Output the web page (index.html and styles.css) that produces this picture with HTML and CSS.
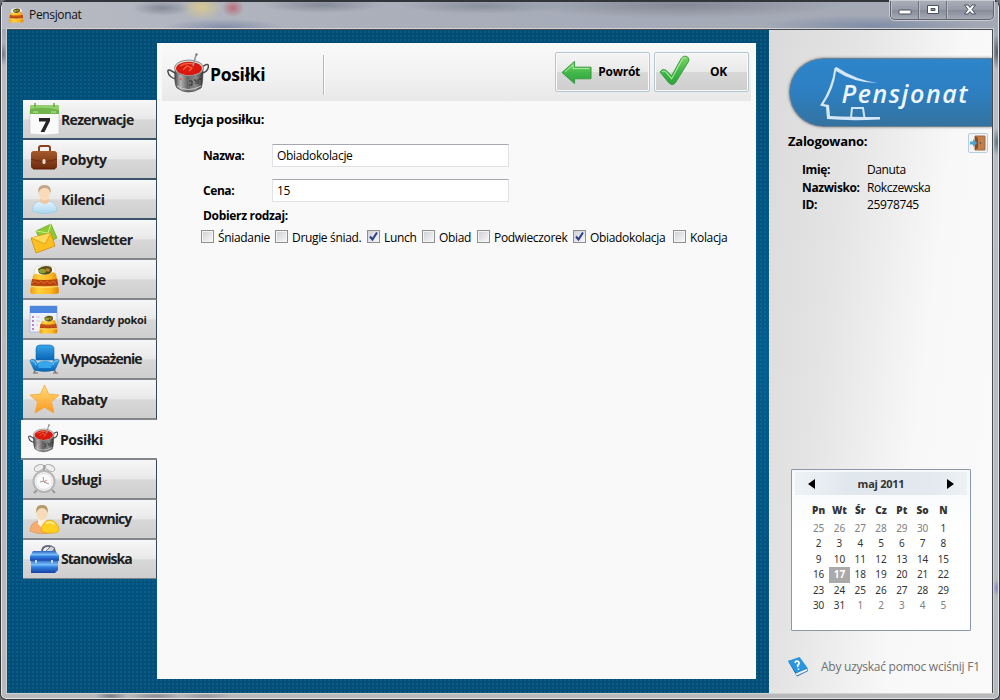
FILE: index.html
```html
<!DOCTYPE html>
<html lang="pl">
<head>
<meta charset="utf-8">
<title>Pensjonat</title>
<link rel="stylesheet" href="styles.css">
</head>
<body>
<svg class="defs" width="0" height="0">
  <defs>
    <linearGradient id="green" x2="0" y2="1"><stop stop-color="#7fd65e"/><stop offset=".5" stop-color="#43b84a"/><stop offset="1" stop-color="#2aa43a"/></linearGradient>
    <linearGradient id="steel"><stop stop-color="#444"/><stop offset=".2" stop-color="#b5b5b5"/><stop offset=".45" stop-color="#666"/><stop offset=".75" stop-color="#8a8a8a"/><stop offset="1" stop-color="#333"/></linearGradient>
    <linearGradient id="blue" x2="0" y2="1"><stop stop-color="#38a5ea"/><stop offset="1" stop-color="#0864b4"/></linearGradient>
    <linearGradient id="gold" x2="0" y2="1"><stop stop-color="#ffe07a"/><stop offset="1" stop-color="#fb9620"/></linearGradient>
    <linearGradient id="brown" x2="0" y2="1"><stop stop-color="#a55a2c"/><stop offset="1" stop-color="#6c2a0c"/></linearGradient>
    <linearGradient id="shirt" x2="0" y2="1"><stop stop-color="#e6f4fc"/><stop offset="1" stop-color="#a9d6f0"/></linearGradient>
    <linearGradient id="box" x2="0" y2="1"><stop stop-color="#2763c8"/><stop offset=".35" stop-color="#79bdf8"/><stop offset=".55" stop-color="#2f7fe0"/><stop offset="1" stop-color="#1a3fa5"/></linearGradient>
    <linearGradient id="quilt"><stop stop-color="#f09c10"/><stop offset=".3" stop-color="#ffd03c"/><stop offset=".7" stop-color="#fdb823"/><stop offset="1" stop-color="#dc8408"/></linearGradient>
  </defs>
  <symbol id="bed" viewBox="0 0 32 32">
    <path d="M6 12 7 5Q8 3 12 3Q18 1 23 3Q27 3 27 6L28 13Z" fill="#f8f7f0" stroke="#d8d2c4" stroke-width=".6"/>
    <path d="M5 13Q6 10 10 11Q18 14 25 9Q28 10 28.500 13L31 28Q31 31 28 31H5Q2 31 2 28Z" fill="url(#quilt)"/>
    <path d="M4 16Q16 18 29.300 16L30.200 22.500Q16 24 2.800 22.500Z" fill="#b8430f"/>
    <path d="M4 20l3-2 3 2.500 3-2.500 3 2.500 3-2.500 3 2.500 3-2.500 3 2.500" stroke="#dd7422" fill="none"/>
    <path d="M2.700 23.500Q16 25 30.300 23.500" fill="none" stroke="#ffe07a" stroke-width="1.200"/>
    <path d="M10 6Q16 1 23 4Q26 8 21 11Q15 13 11 10Z" fill="#55501b"/><ellipse cx="14.500" cy="8" rx="3.500" ry="2.300" fill="#8da12e"/><path d="M18 5l4 1-1 3-3-1z" fill="#c77c2c"/>
  </symbol>
  <symbol id="pot" viewBox="0 0 42 42">
    <path d="M9 21Q0 14 1 19Q2 25 10 26M34 15Q41 9 41.500 13Q41 19 35 20" fill="none" stroke="#4a4a4a" stroke-width="1.500"/>
    <path d="M8 17Q7 31 10 35Q21 43 34 35Q36 31 36 15Z" fill="url(#steel)" stroke="#444" stroke-width=".7"/>
    <path d="M10 33Q21 40 34 33" fill="none" stroke="#ccc" stroke-width="1"/>
    <ellipse cx="22" cy="15" rx="14.500" ry="8" fill="#d5d5d5" stroke="#777" stroke-width=".8"/>
    <ellipse cx="22" cy="15.500" rx="13" ry="6.800" fill="#d9190d"/>
    <path d="M13 13Q19 9 27 11M16 17l4-4 5 2-3 3" stroke="#f5673f" stroke-width="1.300" fill="none"/>
    <path d="M26 13 29 2" stroke="#999" stroke-width="1.600"/><circle cx="29.500" cy="1.500" r="1.200" fill="#777"/>
    <path d="M22 28h3v4h-3m5-5h2v4m2-5v5m1-5h3" stroke="#292929" stroke-width=".9" fill="none"/>
    <circle cx="13.500" cy="26" r="1.200" fill="#d66"/>
  </symbol>
  <symbol id="cal" viewBox="0 0 32 32">
    <path d="M2 8H31V31Q16 33 2 31Z" fill="#fafafa" stroke="#c5c5c5" stroke-width=".7"/>
    <path d="M2 4Q2 2 4 2H29Q31 2 31 4V11H2Z" fill="#6fb54b"/><path d="M2 6Q16 3 31 7V4Q31 2 29 2H4Q2 2 2 4Z" fill="#94d06d"/>
    <path d="M7 0v4M26 0v4" stroke="#6aa34d" stroke-width="1.500"/><path d="M5 9h5m13 0h5" stroke="#c5e7ae"/>
    <path d="M11 15H22V18L16.500 29H12.500L18 18.500H11Z" fill="#252525"/>
  </symbol>
  <symbol id="case" viewBox="0 0 32 32">
    <path d="M11 8V5Q11 3 13 3H20Q22 3 22 5V8" fill="none" stroke="#88411d" stroke-width="2"/>
    <rect x="3" y="8" width="26" height="18" rx="3" fill="url(#brown)"/><path d="M3 16Q16 21 29 16" fill="none" stroke="#6f2c10"/>
    <rect x="14.500" y="16" width="3" height="5" rx="1.500" fill="#e9dccf"/><path d="M5 26h22" stroke="#5d2109"/>
  </symbol>
  <symbol id="person" viewBox="0 0 32 32">
    <path d="M4 28Q4 20 12 18Q17 21 21 18Q29 20 29 28Q17 33 4 28Z" fill="url(#shirt)" stroke="#9ec8df" stroke-width=".7"/>
    <path d="M12 16h9v3q-4 4-9 0z" fill="#efc79e"/><ellipse cx="16.500" cy="10" rx="5.800" ry="7.500" fill="#f8dcb9"/>
    <path d="M10.500 10Q9 2 16.500 2Q24 2 22.500 10Q21 5 17 5Q12 5 10.500 10Z" fill="#c2a688"/>
  </symbol>
  <symbol id="mail" viewBox="0 0 32 32">
    <path d="M8 8 23 1 29 15 14 22Z" fill="#8cc936" stroke="#67a320" stroke-width=".7"/><path d="M8 8 20 10 23 1" fill="none" stroke="#d2ef87"/>
    <path d="M3 15 23 10 27 23 8 30Z" fill="#fbbf22" stroke="#d98b0b" stroke-width=".8"/><path d="M3 15 17 21 23 10" fill="#ffd95b" stroke="#d7940f" stroke-width=".8"/>
  </symbol>
  <symbol id="standards" viewBox="0 0 32 32">
    <rect x="2" y="3" width="27" height="26" fill="#eef2fb" stroke="#9aafe0" stroke-width=".7"/><path d="M2 3H29V10H2Z" fill="#4b86dc"/>
    <path d="M4 14h2m-2 4h2m-2 4h2m-2 4h2" stroke="#b55aaa" stroke-width="1.500"/><path d="M8 14h4m-4 4h4m-4 4h2" stroke="#ccc"/>
    <use href="#bed" x="9" y="11" width="22" height="20"/>
  </symbol>
  <symbol id="chair" viewBox="0 0 32 32">
    <path d="M6 29 10 25H23L28 29M5 30h5m15 0h5" stroke="#666" stroke-width="1.200" fill="none"/>
    <path d="M8 17V6Q8 2 12 2H21Q26 2 26 6V17Z" fill="url(#blue)" stroke="#0d68b0" stroke-width=".6"/>
    <path d="M2 18Q3 15 7 17L11 23H23L26 17Q31 15 31 18L27 27Q17 30 6 27Z" fill="url(#blue)" stroke="#0d68b0" stroke-width=".6"/>
    <path d="M9 20Q17 15 25 20L23 25H11Z" fill="#38a5ea"/>
    <path d="M3 18q4-1 5 4m22-4q-4-1-5 4" fill="none" stroke="#87d5ff"/>
  </symbol>
  <symbol id="star" viewBox="0 0 32 32"><path d="M16.500 2 20.500 11 31 12 23.500 19 26 30 16.500 24.500 7 30 9.500 19 2 12 12.500 11Z" fill="url(#gold)" stroke="#f5a73d" stroke-width=".8" stroke-linejoin="round"/></symbol>
  <symbol id="clock" viewBox="0 0 32 32">
    <path d="M9 27 6 30M24 27 27 30M16 2v6" stroke="#999" stroke-width="2"/>
    <ellipse cx="11" cy="5" rx="5" ry="3" fill="#eee" stroke="#aaa" transform="rotate(-25 11 5)"/><ellipse cx="22" cy="5" rx="5" ry="3" fill="#eee" stroke="#aaa" transform="rotate(25 22 5)"/>
    <circle cx="16" cy="18.500" r="10.500" fill="#f5f5f5" stroke="#b5b5b5" stroke-width="2"/><circle cx="16" cy="18.500" r="8" fill="#fafafa" stroke="#e2e2e2"/>
    <path d="M15 14l1 5 5 2M12 19l4-1" stroke="#999" fill="none"/><path d="M16 19l3-2" stroke="#d88"/>
  </symbol>
  <symbol id="worker" viewBox="0 0 32 32">
    <path d="M2 28Q2 20 10 18H18Q24 20 25 29Q13 33 2 28Z" fill="#f7ad70" stroke="#dc8a4b" stroke-width=".6"/>
    <path d="M10 16h8l-1 6-3 3-4-4z" fill="#fff0df"/><ellipse cx="14" cy="10" rx="5.500" ry="7.500" fill="#f8dcb9"/>
    <path d="M8.500 10Q7 2 14 2Q21 2 19.500 10Q18 5 14 5Q10 5 8.500 10Z" fill="#b49a6a"/>
    <path d="M13 28Q14 18 22 17Q29 18 31 26L30 29Q21 32 13 28Z" fill="#ffcf22" stroke="#dda300" stroke-width=".7"/><path d="M18 20q5-2 8 1" fill="none" stroke="#fff0a0" stroke-width="1.500"/>
  </symbol>
  <symbol id="toolbox" viewBox="0 0 32 32">
    <path d="M14 9Q14 3 20 3Q26 3 27 9" fill="none" stroke="#667" stroke-width="2"/><path d="M18 8l5-5 4 2-4 5z" fill="#ccd5dd" stroke="#556" stroke-width=".8"/>
    <path d="M2 13 5 8H27L31 12V18H2Z" fill="url(#box)"/><path d="M3 17H30V27L27 30H3Z" fill="url(#box)"/><path d="M2 17.500H31" stroke="#2758b4"/>
    <path d="M7 17v3h2v-3m14 0v3h2v-3" fill="#b7dcff"/>
  </symbol>
</svg>

<div class="window">
  <header class="titlebar">
    <svg class="app-icon"><use href="#bed"/></svg>
    <span class="app-name">Pensjonat</span>
    <div class="controls">
      <span class="ctl"><svg width="14" height="12"><rect x="1" y="6" width="12" height="4" rx=".5" fill="#fff" stroke="#4b505c"/></svg></span>
      <span class="ctl"><svg width="14" height="12"><path d="M1.500 1.500h11v8h-11zM5 4.500v2h4v-2z" fill="#fff" fill-rule="evenodd" stroke="#4b505c"/></svg></span>
      <span class="ctl close"><svg width="14" height="12"><path d="M1.500 1h3.500l2 2.500L9 1h3.500L9 5.500l3.500 4.500H9L7 7.500 5 10H1.500L5 5.500z" fill="#fff" stroke="#4b505c"/></svg></span>
    </div>
  </header>
  <div class="content">
    <nav class="tabs">
      <a class="tab"><svg><use href="#cal"/></svg><span class="snug">Rezerwacje</span></a>
      <a class="tab"><svg><use href="#case"/></svg><span>Pobyty</span></a>
      <a class="tab"><svg><use href="#person"/></svg><span>Kilenci</span></a>
      <a class="tab"><svg><use href="#mail"/></svg><span class="snug">Newsletter</span></a>
      <a class="tab"><svg><use href="#bed"/></svg><span>Pokoje</span></a>
      <a class="tab"><svg><use href="#standards"/></svg><span class="small">Standardy pokoi</span></a>
      <a class="tab"><svg><use href="#chair"/></svg><span class="tight">Wyposażenie</span></a>
      <a class="tab"><svg><use href="#star"/></svg><span>Rabaty</span></a>
      <a class="tab active"><svg><use href="#pot"/></svg><span>Posiłki</span></a>
      <a class="tab"><svg><use href="#clock"/></svg><span>Usługi</span></a>
      <a class="tab"><svg><use href="#worker"/></svg><span class="tight">Pracownicy</span></a>
      <a class="tab"><svg><use href="#toolbox"/></svg><span class="tight">Stanowiska</span></a>
    </nav>
    <main class="panel">
      <div class="toolbar">
        <svg class="pot"><use href="#pot"/></svg>
        <h1>Posiłki</h1>
        <span class="divider"></span>
        <button class="btn"><svg viewBox="0 0 32 32"><path d="M1 16.500 14 5V11H31V23H14V28Z" fill="url(#green)" stroke="#3a9a45"/><path d="M4 16 12.500 8.500V12.500H29.500" fill="none" stroke="#a9eda0"/></svg><span>Powrót</span></button>
        <button class="btn ok"><svg viewBox="0 0 32 32"><path d="M1 17Q3 13 7 15L13 21 23 3Q26-1 30 2Q32 4 30 7L17 28Q14 32 10 28Z" fill="url(#green)" stroke="#3a9a45"/><path d="M3 17q2-2 4 0l6 7L24 4q2-3 4-1" fill="none" stroke="#a4e898" stroke-width="1.200"/></svg><span>OK</span></button>
      </div>
      <form class="form">
        <h2>Edycja posiłku:</h2>
        <div class="field"><label>Nazwa:</label><div class="input">Obiadokolacje</div></div>
        <div class="field"><label>Cena:</label><div class="input">15</div></div>
        <div class="group">Dobierz rodzaj:</div>
        <div class="checks">
          <label class="check c1"><i></i>Śniadanie</label>
          <label class="check c2"><i></i>Drugie śniad.</label>
          <label class="check c3"><i class="on"><svg viewBox="0 0 11 11"><path d="M2 5.500 4.500 8.500 9 1.500" /></svg></i>Lunch</label>
          <label class="check c4"><i></i>Obiad</label>
          <label class="check c5"><i></i>Podwieczorek</label>
          <label class="check c6"><i class="on"><svg viewBox="0 0 11 11"><path d="M2 5.500 4.500 8.500 9 1.500" /></svg></i>Obiadokolacja</label>
          <label class="check c7"><i></i>Kolacja</label>
        </div>
      </form>
    </main>
    <aside class="side">
      <div class="logo">
        <svg viewBox="0 0 204 70" width="204" height="70">
          <path d="M45.500 10 47.500 9Q67 22 88.500 25Q65 25 47 13Q45 31 34.500 46L40 47 41 58Q60 59 91 59V61.500Q60 63 38 61L37 49 31 47.500Q43 30 45.500 10Z" fill="#d3e7f8"/>
          <path d="M62 60 63 50H74L75.500 60" fill="none" stroke="#cfe5f8" stroke-width="2"/>
          <text x="52.500" y="45" class="logo-text" textLength="126">Pensjonat</text>
        </svg>
      </div>
      <div class="logged"><strong>Zalogowano:</strong>
        <button class="exit"><svg width="16" height="16"><path d="M5 1H15V15H5Z" fill="#c07f4c" stroke="#a06a40"/><path d="M5 1 8 3V13L5 15Z" fill="#805034"/><circle cx="10.500" cy="8" r=".8" fill="#543"/><path d="M0 6.500H3V4L7 8 3 12V9.500H0Z" fill="#4aa7cc"/></svg></button>
      </div>
      <dl class="user"><dt>Imię:</dt><dd>Danuta</dd><dt>Nazwisko:</dt><dd>Rokczewska</dd><dt>ID:</dt><dd>25978745</dd></dl>
      <section class="calendar">
        <div class="cal-head"><svg width="8" height="10"><path d="M7 0V10L0 5Z"/></svg><b>maj 2011</b><svg width="8" height="10"><path d="M1 0V10L8 5Z"/></svg></div>
        <div class="weekdays"><b>Pn</b><b>Wt</b><b>Śr</b><b>Cz</b><b>Pt</b><b>So</b><b>N</b></div>
        <div class="days">
          <span class="dim">25</span><span class="dim">26</span><span class="dim">27</span><span class="dim">28</span><span class="dim">29</span><span class="dim">30</span><span>1</span>
          <span>2</span><span>3</span><span>4</span><span>5</span><span>6</span><span>7</span><span>8</span>
          <span>9</span><span>10</span><span>11</span><span>12</span><span>13</span><span>14</span><span>15</span>
          <span>16</span><span class="today">17</span><span>18</span><span>19</span><span>20</span><span>21</span><span>22</span>
          <span>23</span><span>24</span><span>25</span><span>26</span><span>27</span><span>28</span><span>29</span>
          <span>30</span><span>31</span><span class="dim">1</span><span class="dim">2</span><span class="dim">3</span><span class="dim">4</span><span class="dim">5</span>
        </div>
      </section>
      <footer class="help">
        <svg width="20" height="20" viewBox="0 0 20 20"><path d="M0 4 7 16 9 19.500 20 14V12L12 1Z" fill="#0b5fa8"/><path d="M7.500 16.500 19.500 11.500V13.500L9 18.500Z" fill="#eef6fc"/><path d="M0 4 11.500 0 19.500 11 8 16Z" fill="#2997df"/><path d="M7 6Q8 3 10.500 4.500Q12 7 9.500 8.500L10 10M10.300 11.500l.4 1.200" fill="none" stroke="#fff" stroke-width="1.700"/></svg>
        <span>Aby uzyskać pomoc wciśnij F1</span>
      </footer>
    </aside>
  </div>
</div>
</body>
</html>
```

FILE: styles.css
```css
* { box-sizing: border-box; }
body { margin: 0; width: 1000px; height: 700px; overflow: hidden; background: #6e7076; font-family: "Open Sans", "Noto Sans", sans-serif; font-size: 12px; color: #000; }
.defs { position: absolute; }
.window {
  width: 1000px; height: 700px; padding: 0 6px 6px; display: flex; flex-direction: column;
  border: 1px solid #33353c; border-top-width: 2px; border-radius: 7px 7px 6px 6px;
  background:
    radial-gradient(ellipse 5px 18px at 996px 50px, #555866, transparent),
    radial-gradient(ellipse 5px 14px at 996px 140px, #5a7580, transparent),
    radial-gradient(ellipse 5px 12px at 2px 52px, #777a88, transparent),
    radial-gradient(ellipse 4px 8px at 996px 586px, #8d86c4, transparent),
    radial-gradient(ellipse 16px 4px at 110px 694px, #777a84, transparent),
    radial-gradient(ellipse 26px 3px at 155px 694px, #8b8990, transparent),
    radial-gradient(ellipse 26px 3px at 205px 694px, #96949c, transparent),
    linear-gradient(#a9adb8, #a1a8b6 28px, #bcbcbf 60px, #b9b8ba);
  box-shadow: inset 0 0 0 1px #e4e5e8;
}
.titlebar {
  height: 27px; flex: none; display: flex; align-items: flex-start; margin: 0 -5px; padding-left: 6px;
  background: radial-gradient(ellipse 20px 13px at 200px 5px, #d6c88e, transparent), radial-gradient(ellipse 11px 9px at 231px 6px, #b96f7a, transparent), radial-gradient(ellipse 30px 8px at 160px 6px, #858a98, transparent), radial-gradient(ellipse 60px 8px at 320px 3px, #868b98, transparent), radial-gradient(ellipse 80px 8px at 480px 4px, #8a8f9c, transparent), radial-gradient(ellipse 160px 13px at 680px 3px, #858895, transparent), radial-gradient(ellipse 60px 8px at 222px 25px, #858fac, transparent), radial-gradient(ellipse 110px 11px at 870px 24px, #808da6, transparent), linear-gradient(90deg, #b9bbc4, #abb0bb 35%, #a5abb8 60%, #a3a8b4);
}
.app-icon { width: 16px; height: 16px; margin-top: 5px; }
.app-name { margin: 4px 0 0 5px; line-height: 18px; letter-spacing: -.34px; color: #111; }
.controls { display: flex; margin: -1px 4px 0 auto; height: 19px; border: 1px solid #60646f; border-top: 0; border-radius: 0 0 5px 5px; box-shadow: 0 0 0 1px #c9ccd3; background: linear-gradient(#a9adb7, #959aa6 50%, #858b99 51%, #a7abb5); overflow: hidden; }
.ctl { width: 28px; display: flex; align-items: center; justify-content: center; border-right: 1px solid #6d717c; box-shadow: inset 1px 0 #b9bdc6; }
.ctl.close { width: 46px; border: 0; }
.content { flex: 1; min-height: 0; display: flex; border: 1px solid #454b55; border-width: 1px 1px 0 0; box-shadow: 0 0 0 1px #d2d2d2; background-color: #025482; background-image: radial-gradient(circle, rgba(30, 125, 165, .28) .8px, transparent 1.400px), linear-gradient(#024c74, #035d8f 50%, #034d77); background-size: 4px 4px, 100% 100%; }
.tabs { width: 150px; flex: none; padding: 70px 0 0 16px; }
.tab { display: flex; align-items: center; height: 40px; padding-left: 5px; border-right: 1px solid #33465a; border-bottom: 2px solid #3b526b; background: linear-gradient(#f7f7f7, #e9e9e9 50%, #d8d8d8 52%, #cfcfcf); color: #202020; }
.tab:nth-child(n+4) { border-bottom-color: #83868a; }
.tab:last-child { border-bottom: 1px solid #77818a; height: 39px; }
.tab svg { width: 32px; height: 32px; flex: none; }
.tab span { margin-left: 1px; font-size: 14px; font-weight: 700; letter-spacing: -.45px; white-space: nowrap; }
.tab span.snug { letter-spacing: -.66px; }
.tab span.small { font-size: 11px; letter-spacing: -.3px; }
.tab span.tight { letter-spacing: -.98px; margin-top: -2px; }
.tab.active { margin-left: -2px; padding-left: 7px; border-right: 0; background: #f9f9f9; }
.tab.active svg { width: 30px; height: 30px; margin-right: 1px; }
.panel { width: 599px; flex: none; margin: 13px 0 14px; background: #f9f9f9; }
.toolbar { height: 58px; margin: 0 5px; padding: 0 2px 0 5px; display: flex; align-items: center; background: linear-gradient(#f9f9f9, #f3f3f3 50%, #e8e8e8); }
.pot { width: 42px; height: 42px; margin-top: 3px; }
h1 { margin: 4px 0 0 1px; width: 113px; font-size: 17.500px; letter-spacing: -.3px; line-height: 24px; }
.divider { height: 40px; width: 2px; margin-top: 6px; background: #b9b9b9; border-right: 1px solid #fff; }
.btn { width: 95px; height: 40px; margin: 0 4px 0 auto; padding: 0 9px 2px 5px; display: flex; align-items: center; justify-content: space-between; border: 1px solid #b4c6d0; border-radius: 2px; box-shadow: inset 0 0 0 1px #fafafa; background: linear-gradient(#f5f5f5, #e9e9e9 49%, #d8d8d8 51%, #cecece); font: 700 12px "Open Sans", sans-serif; letter-spacing: -.28px; }
.btn svg { width: 31px; height: 32px; margin-top: 2px; }
.btn.ok { margin: 0; padding: 0 21px 2px 4px; }
.btn.ok svg { margin-top: 0; }
.form { padding: 9px 0 0 17px; }
h2 { margin: 0; font-size: 13px; line-height: 18px; letter-spacing: -.38px; }
.field { display: flex; align-items: center; margin: 16px 0 0 29px; height: 23px; }
.field + .field { margin-top: 12px; }
.field label { width: 69px; font-weight: 700; letter-spacing: -.42px; }
.input { width: 237px; height: 23px; padding: 0 4px; line-height: 22px; background: #fff; border: 1px solid #dfe1e5; border-top-color: #a5a8ae; letter-spacing: -.32px; }
.group { margin: 5px 0 0 29px; font-weight: 700; line-height: 17px; letter-spacing: -.32px; }
.checks { display: flex; margin: 5px 0 0 27px; }
.check { display: flex; align-items: center; height: 17px; flex: none; white-space: nowrap; letter-spacing: -.33px; }
.check i { width: 13px; height: 13px; margin: -2px 4px 0 0; flex: none; border: 1px solid #8e8f8f; background: linear-gradient(135deg, #cfd2d6, #f6f6f6) content-box, #f4f4f4; padding: 1px; display: flex; }
.check i.on { padding: 0; }
.check path { fill: none; stroke: #2b3f86; stroke-width: 2; }
.c1 { width: 74px; } .c2 { width: 92px; } .c3 { width: 55px; } .c4 { width: 55px; } .c5 { width: 96px; } .c6 { width: 100px; }
.side { flex: 1; margin-left: 13px; display: flex; flex-direction: column; background: linear-gradient(97deg, #dadada, #e4e4e4 30%, #f8f8f8 65%, #fafafa); }
.logo { height: 69px; margin: 28px 0 0 20px; flex: none; border-radius: 35px 0 0 35px; background: linear-gradient(#2e85ca, #2d7fc1 50%, #34729f); border: 1px solid #6b7f91; border-right: 0; box-shadow: 0 0 3px 0 #777; clip-path: inset(-5px 0 -5px -5px); }
.logo svg { display: block; margin: -1px; }
.logo-text { font: italic 600 25px "Open Sans", sans-serif; fill: #eef6fd; }
.logged { display: flex; justify-content: space-between; margin: 6px 4px 0 19px; height: 20px; flex: none; }
.logged strong { font-size: 13px; line-height: 17px; letter-spacing: -.25px; }
.exit { width: 20px; height: 20px; padding: 1px; border: 1px solid #b7cfdd; border-radius: 2px; background: #f4f4f4; display: flex; }
.user { display: grid; grid-template-columns: 65px 1fr; grid-auto-rows: 17.500px; margin: 8px 0 0 33px; line-height: 18px; letter-spacing: -.38px; }
.user dt { font-weight: 700; }
.user dd { margin: 0; }
.calendar { width: 180px; height: 162px; margin: auto 0 24px 22px; padding: 2px 3px 3px; border: 1px solid #8b98a7; border-radius: 1px; background: linear-gradient(#f6f8f9, #fff 40%); color: #333; flex: none; }
.cal-head { height: 23px; padding: 0 13px; display: flex; align-items: center; justify-content: space-between; background: linear-gradient(90deg, #eef2f5, #e1e8ed 30%, #e3e9ee 80%, #eef2f5); font: 600 11px "Open Sans", sans-serif; }
.cal-head b { font-weight: 700; letter-spacing: -.25px; }
.weekdays, .days { display: grid; grid-template-columns: repeat(7, 20.800px); justify-content: center; text-align: center; }
.weekdays { margin-top: 7px; font: 700 10px/16px "Noto Sans", sans-serif; }
.days { margin-top: 3px; grid-auto-rows: 15.400px; font: 10px/15.400px "Noto Sans", sans-serif; letter-spacing: -.1px; }
.dim { color: #808080; }
.today { background: #aaa; color: #fff; font-weight: 700; }
.help { height: 24px; flex: none; display: flex; align-items: center; gap: 13px; margin: 0 0 14px 19px; color: #707070; letter-spacing: -.25px; white-space: nowrap; }
.help span { margin-top: -1px; }
```
